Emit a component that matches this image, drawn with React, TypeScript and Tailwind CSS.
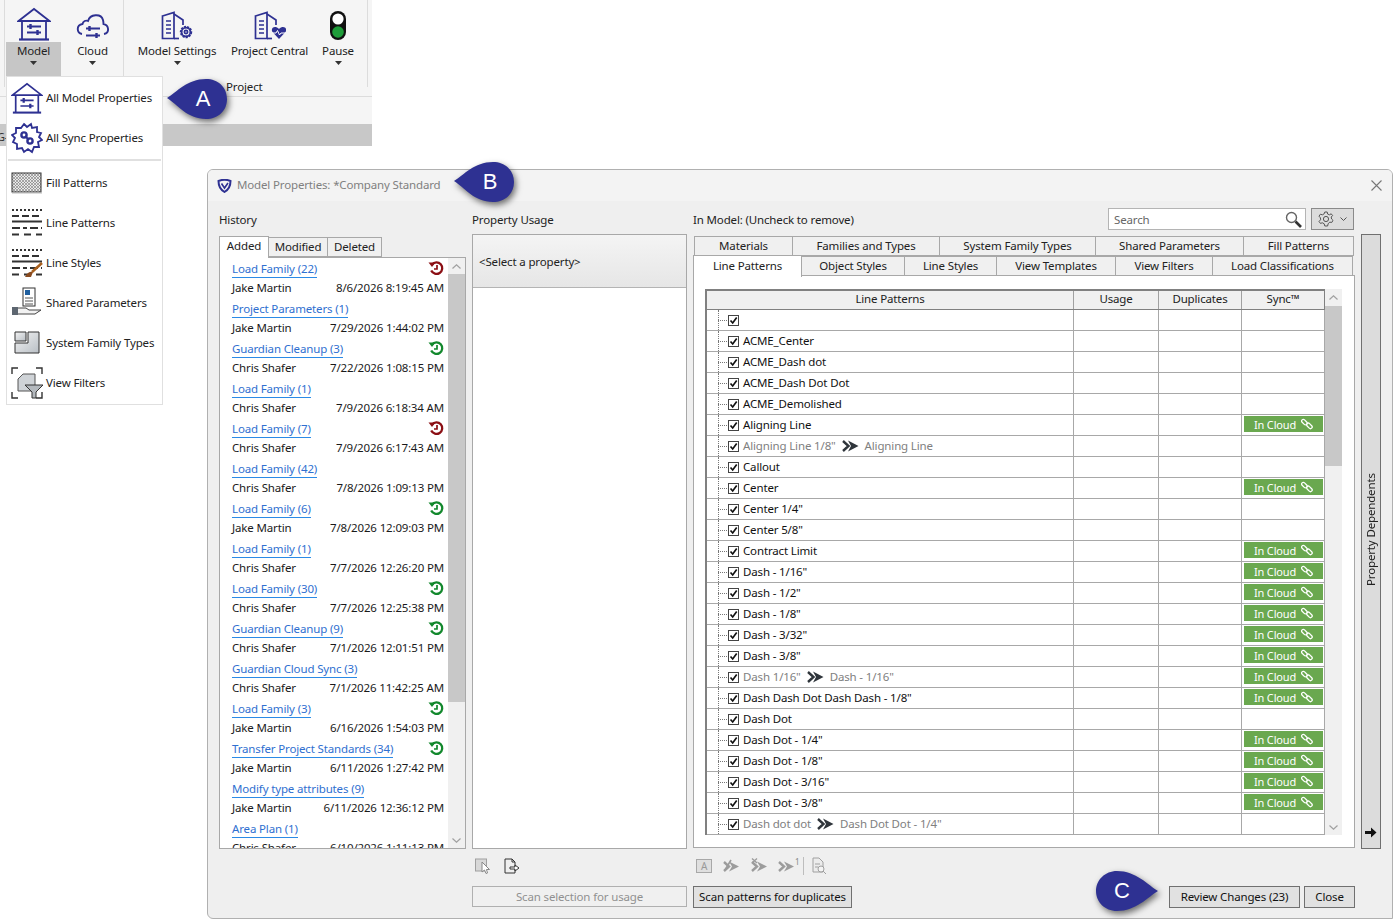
import React from "react";

const NAVY = "#2e3192";

const historyItems: [string, string, string, "" | "red" | "green"][] = [
  ["Load Family (22)", "Jake Martin", "8/6/2026 8:19:45 AM", "red"],
  ["Project Parameters (1)", "Jake Martin", "7/29/2026 1:44:02 PM", ""],
  ["Guardian Cleanup (3)", "Chris Shafer", "7/22/2026 1:08:15 PM", "green"],
  ["Load Family (1)", "Chris Shafer", "7/9/2026 6:18:34 AM", ""],
  ["Load Family (7)", "Chris Shafer", "7/9/2026 6:17:43 AM", "red"],
  ["Load Family (42)", "Chris Shafer", "7/8/2026 1:09:13 PM", ""],
  ["Load Family (6)", "Jake Martin", "7/8/2026 12:09:03 PM", "green"],
  ["Load Family (1)", "Chris Shafer", "7/7/2026 12:26:20 PM", ""],
  ["Load Family (30)", "Chris Shafer", "7/7/2026 12:25:38 PM", "green"],
  ["Guardian Cleanup (9)", "Chris Shafer", "7/1/2026 12:01:51 PM", "green"],
  ["Guardian Cloud Sync (3)", "Chris Shafer", "7/1/2026 11:42:25 AM", ""],
  ["Load Family (3)", "Jake Martin", "6/16/2026 1:54:03 PM", "green"],
  ["Transfer Project Standards (34)", "Jake Martin", "6/11/2026 1:27:42 PM", "green"],
  ["Modify type attributes (9)", "Jake Martin", "6/11/2026 12:36:12 PM", ""],
  ["Area Plan (1)", "Chris Shafer", "6/10/2026 1:11:13 PM", ""],
];

type Row = { name: string; to?: string; cloud?: boolean };
const rows: Row[] = [
  { name: "" },
  { name: "ACME_Center" },
  { name: "ACME_Dash dot" },
  { name: "ACME_Dash Dot Dot" },
  { name: "ACME_Demolished" },
  { name: "Aligning Line", cloud: true },
  { name: 'Aligning Line 1/8"', to: "Aligning Line" },
  { name: "Callout" },
  { name: "Center", cloud: true },
  { name: 'Center 1/4"' },
  { name: 'Center 5/8"' },
  { name: "Contract Limit", cloud: true },
  { name: 'Dash - 1/16"', cloud: true },
  { name: 'Dash - 1/2"', cloud: true },
  { name: 'Dash - 1/8"', cloud: true },
  { name: 'Dash - 3/32"', cloud: true },
  { name: 'Dash - 3/8"', cloud: true },
  { name: 'Dash 1/16"', to: 'Dash - 1/16"', cloud: true },
  { name: 'Dash Dash Dot Dash Dash - 1/8"', cloud: true },
  { name: "Dash Dot" },
  { name: 'Dash Dot - 1/4"', cloud: true },
  { name: 'Dash Dot - 1/8"', cloud: true },
  { name: 'Dash Dot - 3/16"', cloud: true },
  { name: 'Dash Dot - 3/8"', cloud: true },
  { name: "Dash dot dot", to: 'Dash Dot Dot - 1/4"' },
];

const HouseIcon = ({ size = 34 }: { size?: number }) => (
  <svg width={size} height={size} viewBox="0 0 34 34" fill="none" stroke={NAVY} strokeWidth="1.8">
    <path d="M1.5 14 L17 2 L32.5 14 Z" />
    <path d="M5 14 V32 M29 14 V32" strokeWidth="1.8" />
    <path d="M2 32.5 H32" strokeWidth="2.2" />
    <path d="M10 19.5 H24 M10 25.5 H24" strokeWidth="1.8" />
    <path d="M13.5 17 V22 M20.5 23 V28" strokeWidth="2.4" />
  </svg>
);

const CloudIcon = () => (
  <svg width="34" height="30" viewBox="0 0 34 30" fill="none" stroke={NAVY} strokeWidth="1.9">
    <path d="M6 23 C0.5 22 0 14 6.5 13 C7 10 10 9 12 10 C14 3 25 2 27 9 C27.5 11 27.5 12 27.5 13 C33 14 34 22 28 23" />
    <path d="M10 17.5 H24 M10 24.5 H24" strokeWidth="1.8" />
    <path d="M13.5 15 V20 M20.5 22 V27" strokeWidth="2.4" />
  </svg>
);

const BuildingIcon = ({ heart }: { heart?: boolean }) => (
  <svg width="32" height="30" viewBox="0 0 32 30" fill="none" stroke={NAVY} strokeWidth="1.7">
    <path d="M1.5 5 L13 1.5 V27.5 H1.5 Z" />
    <path d="M13 3 L22 9 V14" />
    <path d="M5 10 H10 M5 14 H10 M5 18 H10 M5 22 H10" />
    <path d="M13 27.5 H18" />
    {heart ? (
      <path d="M25 28 L18.5 21 C16 17 21 14 25 18 C29 14 34 17 31.5 21 Z" fill={NAVY} stroke="none" />
    ) : (
      <>
        <circle cx="25" cy="21" r="5" strokeWidth="2.4" strokeDasharray="2 1" />
        <circle cx="25" cy="21" r="4.4" />
        <circle cx="25" cy="21" r="1.6" />
      </>
    )}
    {heart && <path d="M18 22 H22 L23.5 19.5 L25.5 24 L27 22 H32" stroke="#fff" strokeWidth="1" />}
  </svg>
);

const TrafficIcon = () => (
  <svg width="18" height="30" viewBox="0 0 18 30">
    <rect x="1" y="0" width="16" height="29" rx="8" fill="#111" />
    <circle cx="9" cy="8" r="5.6" fill="#fff" />
    <circle cx="9" cy="21" r="5.8" fill="#1f9d3a" />
  </svg>
);

const Caret = () => (
  <svg width="7" height="4" viewBox="0 0 7 4" className="block">
    <path d="M0 0 H7 L3.5 4 Z" fill="#333" />
  </svg>
);

const RibbonBtn = ({
  icon,
  label,
  caret,
  active,
  w,
}: {
  icon: React.ReactNode;
  label: string;
  caret?: boolean;
  active?: boolean;
  w: string;
}) => (
  <div className={`flex flex-col items-center ${w}`}>
    <div className="h-[42px] flex items-end justify-center pb-[1px]">{icon}</div>
    <div className={`w-full h-[34px] flex flex-col items-center pt-[1px] ${active ? "bg-[#c6c6c6]" : ""}`}>
      <span className="leading-[16px] whitespace-nowrap">{label}</span>
      {caret && (
        <div className="mt-[2px]">
          <Caret />
        </div>
      )}
    </div>
  </div>
);

const Ribbon = () => (
  <div className="w-[372px]">
    <div className="h-[97px] bg-[#f5f5f5] border-b border-[#dcdcdc] flex pl-[4px]">
      <div className="flex h-[87px] border-l border-[#dcdcdc] pl-[1px] pr-[2px] gap-[3px]">
        <RibbonBtn w="w-[55px]" active caret label="Model" icon={<HouseIcon />} />
        <RibbonBtn w="w-[57px]" caret label="Cloud" icon={<CloudIcon />} />
      </div>
      <div className="flex flex-col h-[97px] border-l border-[#dcdcdc] w-[244px] pr-[5px]">
        <div className="flex h-[76px] pl-[13px]">
          <RibbonBtn w="w-[80px]" caret label="Model Settings" icon={<BuildingIcon />} />
          <RibbonBtn w="w-[105px]" label="Project Central" icon={<BuildingIcon heart />} />
          <RibbonBtn w="w-[32px]" caret label="Pause" icon={<TrafficIcon />} />
        </div>
        <div className="pl-[102px] leading-[16px] mt-[3px]">Project</div>
      </div>
      <div className="w-px h-[87px] bg-[#dcdcdc]" />
    </div>
    <div className="h-[27px] bg-[#f5f5f5]" />
    <div className="h-[22px] bg-[#c8c8c8]" />
  </div>
);

const FillIcon = () => (
  <svg width="32" height="22" viewBox="0 0 32 22">
    <defs>
      <pattern id="hatch" width="3" height="3" patternUnits="userSpaceOnUse">
        <rect width="3" height="3" fill="#e8e8e8" />
        <path d="M0 0 L3 3 M3 0 L0 3" stroke="#777" strokeWidth="0.6" />
      </pattern>
    </defs>
    <rect x="1" y="1" width="29" height="19" fill="url(#hatch)" stroke="#333" strokeWidth="1" />
    <path d="M1 21 H31" stroke="#bbb" />
  </svg>
);

const LineIcon = ({ brush }: { brush?: boolean }) => (
  <svg width="34" height="30" viewBox="0 0 34 30" fill="none" stroke="#333">
    <path d="M1 2 H31" strokeWidth="2" strokeDasharray="2 2" />
    <path d="M1 8 H31" strokeWidth="2" strokeDasharray="7 3" />
    <path d="M1 13.5 H31" strokeWidth="2" />
    <path d="M1 20 H31" strokeWidth="2" strokeDasharray="8 3 4 3" />
    <path d="M1 26.5 H31" strokeWidth="2" strokeDasharray="7 5" />
    {brush && (
      <>
        <path d="M14 29 C16 24 20 23 22 24 L20 29 Z" fill="#8a4b1f" stroke="none" />
        <path d="M21 24 L31 15" stroke="#a8601e" strokeWidth="2.6" />
      </>
    )}
  </svg>
);

const SharedIcon = () => (
  <svg width="32" height="32" viewBox="0 0 32 32" fill="none">
    <rect x="12" y="1" width="12" height="18" fill="#fff" stroke="#333" />
    <rect x="14" y="3" width="5" height="5" fill="#1f5f9f" />
    <path d="M14 11 H22 M14 14 H22 M14 17 H22" stroke="#555" />
    <rect x="1" y="20" width="6" height="8" fill="#5d6670" />
    <path d="M7 21 H15 L18 23 H30 L24 27 H7" fill="#f2f2f2" stroke="#444" />
  </svg>
);

const SystemIcon = () => (
  <svg width="26" height="24" viewBox="0 0 26 24" className="ml-[3px]">
    <defs>
      <linearGradient id="sys" x1="0" y1="0" x2="1" y2="1">
        <stop offset="0" stopColor="#f4f4f4" />
        <stop offset="1" stopColor="#b9bfc5" />
      </linearGradient>
    </defs>
    <path d="M1 1 H12 V10 H1 Z" fill="url(#sys)" stroke="#333" />
    <path d="M1 12 H14 V1 H25 V22 H1 Z" fill="url(#sys)" stroke="#333" />
  </svg>
);

const ViewFiltersIcon = () => (
  <svg width="32" height="32" viewBox="0 0 32 32" fill="none">
    <path d="M1 7 V1 H7 M25 1 H31 V7 M1 25 V31 H7 M25 31 H31 V25" stroke="#333" strokeWidth="1.4" />
    <path d="M7 12 L12 7 H24 V19 L20 24 H7 Z" fill="#cfd3d7" stroke="#555" />
    <path d="M14 18 H32 L25 25 V31 H21 V25 Z" fill="#b4b9be" stroke="#333" />
  </svg>
);

const SyncGearIcon = () => (
  <svg width="32" height="32" viewBox="0 0 32 32" fill="none" stroke={NAVY} strokeWidth="1.8">
    <path d="M13 2 L16 5 L20 2 L21 6 L26 5 L26 10 L30 11 L28 15 L31 18 L27 20 L28 25 L23 25 L21 30 L17 27 L13 30 L11 26 L6 27 L6 22 L2 20 L4 16 L1 13 L5 11 L5 6 L10 6 Z" />
    <circle cx="13" cy="13" r="2.6" strokeWidth="2.4" />
    <circle cx="19" cy="19" r="2.6" strokeWidth="2.4" />
    <path d="M14 14 L18 18" strokeWidth="2.2" />
  </svg>
);

const MenuItem = ({ icon, label, h = "h-[40px]" }: { icon: React.ReactNode; label: string; h?: string }) => (
  <div className={`flex items-center ${h}`}>
    <div className="w-[39px] flex justify-start pl-[4px] shrink-0">{icon}</div>
    <span className="whitespace-nowrap">{label}</span>
  </div>
);

const Menu = () => (
  <div className="absolute left-[6px] top-[76px] w-[157px] h-[329px] bg-white border border-[#e0e0e0] pt-[1px]">
    <MenuItem icon={<HouseIcon size={32} />} label="All Model Properties" />
    <MenuItem icon={<SyncGearIcon />} label="All Sync Properties" />
    <div className="h-[2px] bg-[#e0e0e0] mx-[1px] mt-[1px] mb-[2px]" />
    <MenuItem icon={<FillIcon />} label="Fill Patterns" />
    <MenuItem icon={<LineIcon />} label="Line Patterns" />
    <MenuItem icon={<LineIcon brush />} label="Line Styles" />
    <MenuItem icon={<SharedIcon />} label="Shared Parameters" />
    <MenuItem icon={<SystemIcon />} label="System Family Types" />
    <MenuItem icon={<ViewFiltersIcon />} label="View Filters" />
  </div>
);

const Callout = ({ className, letter, dir }: { className: string; letter: string; dir: "left" | "right" }) => (
  <div className={`absolute w-[66px] h-[44px] ${className}`}>
    <svg
      width="66"
      height="44"
      viewBox="0 0 66 44"
      className="drop-shadow-[2px_3px_3px_rgba(0,0,0,0.55)]"
    >
      {dir === "left" ? (
        <path d="M2 21 C12 15 22 2 41 2 C53 2 62 10 62 22 C62 34 53 42 41 42 C22 42 12 27 2 21 Z" fill={NAVY} />
      ) : (
        <path d="M64 22 C54 28 42 42 23 42 C11 42 2 33 2 22 C2 11 11 2 23 2 C42 2 54 16 64 22 Z" fill={NAVY} />
      )}
    </svg>
    <span
      className={`absolute top-0 h-[42px] flex items-center justify-center text-white text-[22px] w-[40px] tracking-normal font-['Liberation_Sans',sans-serif] ${
        dir === "left" ? "left-[18px]" : "left-[8px]"
      }`}
    >
      {letter}
    </span>
  </div>
);

const HistoryArrow = ({ color }: { color: string }) => (
  <svg width="16" height="15" viewBox="0 0 16 15" fill="none" stroke={color} strokeWidth="2.3">
    <path d="M4 3.4 A5.8 5.8 0 1 1 3.2 9.6" />
    <path d="M0.5 1.5 H7.5 L4 6 Z" fill={color} stroke="none" />
    <path d="M9 4 V8 H6" strokeWidth="1.7" />
  </svg>
);

const ScrollUp = () => (
  <svg width="9" height="5" viewBox="0 0 9 5" fill="none" stroke="#a0a0a0" strokeWidth="1.2">
    <path d="M0.5 4.5 L4.5 0.8 L8.5 4.5" />
  </svg>
);
const ScrollDown = () => (
  <svg width="9" height="5" viewBox="0 0 9 5" fill="none" stroke="#a0a0a0" strokeWidth="1.2">
    <path d="M0.5 0.5 L4.5 4.2 L8.5 0.5" />
  </svg>
);

const History = () => (
  <div className="w-[247px] flex flex-col shrink-0">
    <div className="h-[36px] pt-[12px] leading-[16px]">History</div>
    <div className="flex h-[21px] items-end">
      <div className="h-[22px] w-[50px] bg-white border border-[#a8a8a8] border-b-0 flex items-center justify-center relative z-10 -mb-px pb-[3px]">
        Added
      </div>
      <div className="h-[20px] w-[59px] bg-[#f0f0f0] border border-[#a8a8a8] border-l-0 flex items-center justify-center pb-[1px]">
        Modified
      </div>
      <div className="h-[20px] w-[54px] bg-[#f0f0f0] border border-[#a8a8a8] border-l-0 flex items-center justify-center pb-[1px]">
        Deleted
      </div>
    </div>
    <div className="h-[592px] bg-white border border-[#a8a8a8] flex overflow-hidden">
      <div className="w-[228px] pl-[12px] pr-[4px] pt-[2px] shrink-0">
        {historyItems.map(([title, user, date, mark], i) => (
          <div key={i} className="h-[40px]">
            <div className="flex justify-between items-start h-[20px]">
              <span className="text-[#2f6fd0] border-b border-[#2b8ae6] leading-[17px] whitespace-nowrap">{title}</span>
              {mark && (
                <span className="pt-[1px]">
                  <HistoryArrow color={mark === "red" ? "#8b0f14" : "#12882c"} />
                </span>
              )}
            </div>
            <div className="flex justify-between h-[20px] leading-[16px] text-[#1a1a1a] whitespace-nowrap">
              <span>{user}</span>
              <span>{date}</span>
            </div>
          </div>
        ))}
      </div>
      <div className="w-[17px] bg-[#f0f0f0] flex flex-col items-center shrink-0">
        <div className="h-[16px] flex items-center justify-center">
          <ScrollUp />
        </div>
        <div className="w-full h-[428px] bg-[#c8c8c8]" />
        <div className="flex-1" />
        <div className="h-[16px] flex items-center justify-center">
          <ScrollDown />
        </div>
      </div>
    </div>
  </div>
);

const Usage = () => (
  <div className="w-[215px] flex flex-col shrink-0">
    <div className="h-[34px] pt-[12px] leading-[16px]">Property Usage</div>
    <div className="h-[615px] bg-white border border-[#a8a8a8]">
      <div className="h-[53px] bg-gradient-to-b from-[#f4f4f4] to-[#e6e6e6] border-b border-[#b4b4b4] pl-[6px] pt-[19px] leading-[16px]">
        {"<Select a property>"}
      </div>
    </div>
  </div>
);

const Tab = ({ w, label }: { w: string; label: string }) => (
  <div className={`${w} h-[20px] bg-[#f0f0f0] border border-[#a8a8a8] border-l-0 flex items-center justify-center whitespace-nowrap shrink-0`}>
    {label}
  </div>
);

const Check = () => (
  <svg width="11" height="11" viewBox="0 0 11 11" fill="none" className="shrink-0">
    <rect x="0.5" y="0.5" width="10" height="10" fill="#fff" stroke="#444" />
    <path d="M2.5 5.5 L4.7 8 L8.7 2.6" stroke="#111" strokeWidth="1.7" />
  </svg>
);

const DoubleArrow = () => (
  <svg width="17" height="12" viewBox="0 0 17 12" fill="#2f353b" className="shrink-0">
    <path d="M1 1 L6.5 6 L1 11" fill="none" stroke="#2f353b" strokeWidth="2.4" />
    <path d="M6 0.5 L16.5 6 L6 11.5 L9 6 Z" />
  </svg>
);

const ChainIcon = () => (
  <svg width="12" height="12" viewBox="0 0 12 12" fill="none" stroke="#fff" strokeWidth="1.3">
    <rect x="0.2" y="2.4" width="6.4" height="3.4" rx="1.7" transform="rotate(45 3.4 4.1)" />
    <rect x="5.2" y="6.2" width="6.4" height="3.4" rx="1.7" transform="rotate(45 8.4 7.9)" />
  </svg>
);

const Grid = () => (
  <div className="flex w-[637px] h-[546px] ml-[11px] mt-[13px]">
    <div className="w-[620px] border-l-2 border-t-2 border-[#808080] shrink-0">
      <div className="flex h-[19px] bg-[#f0f0f0] border-b border-[#808080] text-center">
        <div className="w-[367px] border-r border-[#a0a0a0] leading-[16px]">Line Patterns</div>
        <div className="w-[85px] border-r border-[#a0a0a0] leading-[16px]">Usage</div>
        <div className="w-[83px] border-r border-[#a0a0a0] leading-[16px]">Duplicates</div>
        <div className="w-[83px] border-r border-[#808080] leading-[16px]">Sync™</div>
      </div>
      {rows.map((r, i) => (
        <div key={i} className="flex h-[21px] border-b border-[#a8a8a8] bg-white">
          <div className="w-[367px] border-r border-[#a8a8a8] flex items-center relative pl-[21px]">
            <div className="absolute left-[11px] top-0 bottom-0 border-l border-dotted border-[#777]" />
            <div className="absolute left-[11px] top-[10px] w-[9px] border-t border-dotted border-[#777]" />
            <Check />
            {r.to ? (
              <div className="flex items-center text-[#808080] pl-[4px] whitespace-nowrap">
                <span>{r.name}</span>
                <span className="mx-[6px]">
                  <DoubleArrow />
                </span>
                <span>{r.to}</span>
              </div>
            ) : (
              <span className="pl-[4px] text-[#111] whitespace-nowrap">{r.name}</span>
            )}
          </div>
          <div className="w-[85px] border-r border-[#a8a8a8]" />
          <div className="w-[83px] border-r border-[#a8a8a8]" />
          <div className="w-[83px] border-r border-[#a8a8a8] pl-[2px] pt-[1px]">
            {r.cloud && (
              <div className="w-[79px] h-[16px] bg-[#6aa84f] flex items-center justify-center gap-[5px] text-white text-[11px] leading-none">
                <span>In Cloud</span>
                <ChainIcon />
              </div>
            )}
          </div>
        </div>
      ))}
    </div>
    <div className="w-[17px] bg-[#f0f0f0] flex flex-col items-center shrink-0">
      <div className="h-[17px] flex items-center justify-center">
        <ScrollUp />
      </div>
      <div className="w-full h-[160px] bg-[#c8c8c8]" />
      <div className="flex-1" />
      <div className="h-[16px] flex items-center justify-center">
        <ScrollDown />
      </div>
    </div>
  </div>
);

const InModel = () => (
  <div className="w-[662px] flex flex-col shrink-0">
    <div className="h-[36px] flex items-start justify-between pt-[8px]">
      <span className="pt-[4px] leading-[16px]">In Model: (Uncheck to remove)</span>
      <div className="flex gap-[5px] mr-[1px]">
        <div className="w-[198px] h-[22px] bg-white border border-[#b4b4b4] flex items-center justify-between pl-[5px] pr-[1px] pt-[1px]">
          <span className="text-[#666]">Search</span>
          <svg width="20" height="18" viewBox="0 0 20 18" fill="none">
            <circle cx="7.5" cy="6.5" r="5" fill="#fff" stroke="#666" strokeWidth="1.4" />
            <path d="M11.5 10.5 L17 16" stroke="#333" strokeWidth="2.6" />
          </svg>
        </div>
        <div className="w-[43px] h-[22px] bg-[#dcdcdc] border border-[#8a8a8a] flex items-center justify-center gap-[6px]">
          <svg width="16" height="16" viewBox="0 0 16 16" fill="none" stroke="#555" strokeWidth="1">
            <path d="M6.8 1 H9.2 L9.6 3 L11.4 3.8 L13.2 2.8 L14.6 4.6 L13.2 6 L13.6 8 L15 9.4 L13.8 11.4 L11.8 11.2 L10.2 12.6 L9.6 15 H6.8 L6.2 12.8 L4.4 11.8 L2.4 12.4 L1 10.4 L2.6 8.8 L2.4 6.8 L1 5.2 L2.4 3.2 L4.4 3.8 L6.2 2.8 Z" />
            <circle cx="8" cy="8" r="2.6" />
          </svg>
          <svg width="7" height="4" viewBox="0 0 7 4" fill="none" stroke="#555">
            <path d="M0.5 0.5 L3.5 3.5 L6.5 0.5" />
          </svg>
        </div>
      </div>
    </div>
    <div className="flex pl-[1px] h-[20px]">
      <div className="border-l border-[#a8a8a8] flex">
        <Tab w="w-[98px]" label="Materials" />
        <Tab w="w-[147px]" label="Families and Types" />
        <Tab w="w-[156px]" label="System Family Types" />
        <Tab w="w-[148px]" label="Shared Parameters" />
        <Tab w="w-[110px]" label="Fill Patterns" />
      </div>
    </div>
    <div className="flex h-[20px] relative z-10">
      <div className="w-[109px] h-[22px] -mt-[1px] bg-white border border-[#a8a8a8] border-b-0 flex items-center justify-center pb-[1px]">
        Line Patterns
      </div>
      <Tab w="w-[103px]" label="Object Styles" />
      <Tab w="w-[92px]" label="Line Styles" />
      <Tab w="w-[119px]" label="View Templates" />
      <Tab w="w-[97px]" label="View Filters" />
      <Tab w="w-[140px]" label="Load Classifications" />
    </div>
    <div className="h-[573px] bg-white border border-[#a8a8a8] -mt-px">
      <Grid />
    </div>
  </div>
);

const ToolIcon = ({ children, w = 18 }: { children: React.ReactNode; w?: number }) => (
  <svg width={w} height="18" viewBox={`0 0 ${w} 18`} fill="none" stroke="#a0a0a0" className="shrink-0">
    {children}
  </svg>
);

const GrayArrows = () => (
  <>
    <path d="M2 5 L7 9.5 L2 14" stroke="#9c9c9c" strokeWidth="2.4" />
    <path d="M7 4.5 L17 9.5 L7 14.5 L10 9.5 Z" fill="#9c9c9c" stroke="none" />
  </>
);

const Dialog = () => (
  <div className="absolute left-[207px] top-[169px] w-[1186px] h-[750px] bg-[#efefef] border border-[#b0b0b0] rounded-tl-[6px] rounded-tr-[6px] rounded-bl-[6px] overflow-hidden flex flex-col">
    <div className="h-[31px] bg-[#f3f3f3] flex items-center pl-[9px] shrink-0 justify-between pr-[10px]">
      <div className="flex items-center gap-[5px]">
        <svg width="15" height="14" viewBox="0 0 15 14" fill="none" stroke={NAVY} strokeWidth="2">
          <path d="M1.5 2 C5 0.5 10 0.5 13.5 2 C13.5 7 11 11 7.5 13 C4 11 1.5 7 1.5 2 Z" />
          <path d="M4.5 4.5 L7.5 9 L11 4" strokeWidth="1.6" />
        </svg>
        <span className="text-[#808080] pb-[2px]">Model Properties: *Company Standard</span>
      </div>
      <svg width="11" height="11" viewBox="0 0 11 11" stroke="#777" strokeWidth="1.1">
        <path d="M0.5 0.5 L10.5 10.5 M10.5 0.5 L0.5 10.5" />
      </svg>
    </div>
    <div className="flex-1 flex flex-col pl-[11px]">
      <div className="flex gap-[6px] h-[649px] -mt-[1px]">
        <History />
        <Usage />
        <InModel />
        <div className="w-[20px] h-[615px] mt-[34px] bg-[#dcdcdc] border border-[#707070] flex flex-col items-center relative">
          <span className="absolute left-0 top-[230px] w-[18px] h-[130px] [writing-mode:vertical-rl] rotate-180 flex items-center justify-center whitespace-nowrap text-[#222]">
            Property Dependents
          </span>
          <svg width="12" height="11" viewBox="0 0 12 11" className="absolute bottom-[10px]" fill="#111">
            <path d="M0 4 H6 V0.5 L11.5 5.5 L6 10.5 V7 H0 Z" />
          </svg>
        </div>
      </div>
      <div className="flex">
        <div className="w-[253px] shrink-0" />
        <div className="w-[215px] shrink-0 flex flex-col">
          <div className="h-[24px] mt-[5px] flex items-center gap-[10px] pl-[2px]">
            <ToolIcon>
              <rect x="1.5" y="2" width="11" height="12" fill="#d8d8d8" />
              <path d="M8 5 L8 15 L10.5 13 L12 16.5 L13.5 16 L12.5 12.5 L15.5 12.5 Z" fill="#fff" stroke="#888" />
            </ToolIcon>
            <svg width="18" height="18" viewBox="0 0 18 18" fill="none" stroke="#333" className="shrink-0">
              <path d="M3 2 H10 L13 5 V16 H3 Z" />
              <path d="M10 2 V5 H13" />
              <path d="M8 10 H13 V8 L17 11 L13 14 V12 H8 Z" fill="#fff" />
            </svg>
          </div>
          <div className="h-[21px] mt-[8px] border border-[#b0b0b0] bg-[#f0f0f0] text-[#909090] flex items-center justify-center whitespace-nowrap">
            Scan selection for usage
          </div>
        </div>
        <div className="w-[6px] shrink-0" />
        <div className="flex-1 flex flex-col">
          <div className="h-[24px] mt-[5px] flex items-center gap-[10px] pl-[3px]">
            <div className="w-[16px] h-[14px] border border-[#a8a8a8] bg-[#dfdfdf] flex items-center justify-center text-[10px] leading-none text-[#999] shrink-0">
              A
            </div>
            <ToolIcon>
              <GrayArrows />
              <path d="M3 13 L9 3" stroke="#9c9c9c" strokeWidth="1.6" />
            </ToolIcon>
            <ToolIcon>
              <GrayArrows />
              <path d="M2 1.5 L7 6 M7 1.5 L2 6" stroke="#9c9c9c" strokeWidth="1.4" />
            </ToolIcon>
            <div className="flex items-start -ml-[1px] shrink-0">
              <ToolIcon>
                <GrayArrows />
              </ToolIcon>
              <span className="text-[8px] leading-[10px] text-[#888]">1</span>
            </div>
            <div className="w-px h-[18px] bg-[#bdbdbd] -ml-[6px]" />
            <div className="-ml-[4px]">
              <ToolIcon>
                <path d="M3 1 H9 L13 5 V15 H3 Z" fill="#ececec" />
                <path d="M5 7 H10 M5 10 H8" />
                <circle cx="11" cy="12" r="3" fill="#f4f4f4" />
                <path d="M13 14 L16 17" />
              </ToolIcon>
            </div>
          </div>
          <div className="h-[21px] mt-[8px] flex whitespace-nowrap">
            <div className="w-[159px] h-[22px] border border-[#707070] bg-[#e1e1e1] flex items-center justify-center text-[#111]">
              Scan patterns for duplicates
            </div>
            <div className="w-[317px] shrink-0" />
            <div className="w-[131px] h-[22px] border border-[#707070] bg-[#e1e1e1] flex items-center justify-center text-[#111]">
              Review Changes (23)
            </div>
            <div className="w-[4px] shrink-0" />
            <div className="w-[51px] h-[22px] border border-[#707070] bg-[#e1e1e1] flex items-center justify-center text-[#111]">
              Close
            </div>
          </div>
        </div>
      </div>
    </div>
  </div>
);

export default function App() {
  return (
    <div className="relative w-[1393px] h-[919px] bg-white overflow-hidden text-[11.5px] tracking-[-0.15px] text-[#222] font-['Noto_Sans',sans-serif]">
      <Ribbon />
      <span className="absolute -left-[3px] top-[130px] text-[11px] leading-[14px] text-[#333]">G-</span>
      <Menu />
      <Dialog />
      <Callout className="left-[165px] top-[77px]" letter="A" dir="left" />
      <Callout className="left-[452px] top-[160px]" letter="B" dir="left" />
      <Callout className="left-[1094px] top-[869px]" letter="C" dir="right" />
    </div>
  );
}
